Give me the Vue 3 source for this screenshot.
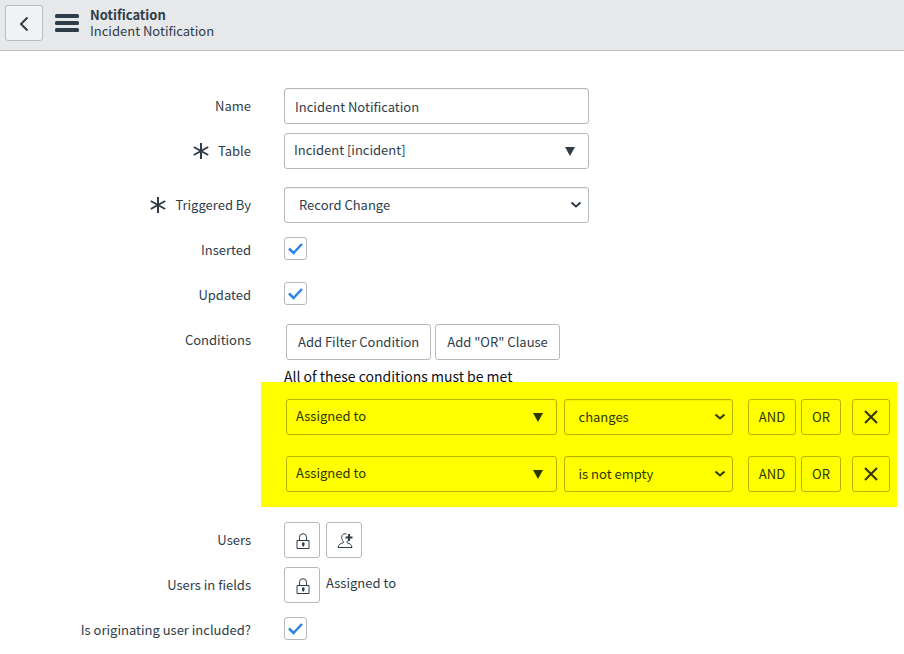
<script setup>
import { reactive } from 'vue'

const form = reactive({
  name: 'Incident Notification',
  table: 'Incident [incident]',
  trigger: 'Record Change',
  inserted: true,
  updated: true,
  originating: true,
})

const conditions = reactive([
  { id: 1, field: 'Assigned to', operator: 'changes' },
  { id: 2, field: 'Assigned to', operator: 'is not empty' },
])
const operators = ['changes', 'is not empty']

function removeCondition(index) {
  conditions.splice(index, 1)
}
</script>

<template>
  <div class="page">
    <header class="bar">
      <button class="back" type="button" aria-label="Back">
        <svg width="12" height="16" viewBox="0 0 12 16"><path d="M9.5 1.5 3 8l6.500 6.500" /></svg>
      </button>
      <button class="menu" type="button" aria-label="Menu">
        <svg width="24" height="18" viewBox="0 0 24 18">
          <rect width="24" height="4" rx="1.500" />
          <rect y="7" width="24" height="4" rx="1.500" />
          <rect y="14" width="24" height="4" rx="1.500" />
        </svg>
      </button>
      <div class="titles">
        <h1>Notification</h1>
        <p>Incident Notification</p>
      </div>
    </header>

    <form class="form" @submit.prevent>
      <div class="row">
        <label class="label" for="name">Name</label>
        <input id="name" v-model="form.name" class="box field text" type="text" />
      </div>

      <div class="row">
        <label class="label" for="table">
          <svg class="star" width="16" height="16" viewBox="0 0 16 16"><path d="M8 0v16M.8 4l14.400 8M15.200 4 .8 12" /></svg>
          Table
        </label>
        <div class="pick field">
          <select id="table" v-model="form.table" class="box reference">
            <option>Incident [incident]</option>
          </select>
          <svg class="triangle" width="10" height="9" viewBox="0 0 10 9"><path d="M0 0h10L5 9z" /></svg>
        </div>
      </div>

      <div class="row spaced">
        <label class="label" for="trigger">
          <svg class="star" width="16" height="16" viewBox="0 0 16 16"><path d="M8 0v16M.8 4l14.400 8M15.200 4 .8 12" /></svg>
          Triggered By
        </label>
        <div class="pick field">
          <select id="trigger" v-model="form.trigger" class="box choice">
            <option>Record Change</option>
          </select>
          <svg class="chevron" width="12" height="8" viewBox="0 0 12 8"><path d="m1.500 1.500 4.500 4 4.500-4" /></svg>
        </div>
      </div>

      <div class="row">
        <label class="label" for="inserted">Inserted</label>
        <span class="check">
          <input id="inserted" v-model="form.inserted" type="checkbox" />
          <svg v-if="form.inserted" width="15" height="12" viewBox="0 0 15 12"><path d="m1 5.500 4.500 4.500L14 1" /></svg>
        </span>
      </div>

      <div class="row">
        <label class="label" for="updated">Updated</label>
        <span class="check">
          <input id="updated" v-model="form.updated" type="checkbox" />
          <svg v-if="form.updated" width="15" height="12" viewBox="0 0 15 12"><path d="m1 5.500 4.500 4.500L14 1" /></svg>
        </span>
      </div>

      <div class="row">
        <span class="label">Conditions</span>
        <div class="conditions">
          <div class="actions">
            <button class="box" type="button">Add Filter Condition</button>
            <button class="box" type="button">Add "OR" Clause</button>
          </div>
          <p class="hint">All of these conditions must be met</p>
          <div class="highlight">
            <div v-for="(c, i) in conditions" :key="c.id" class="condition">
              <div class="pick subject">
                <select v-model="c.field" class="box reference" aria-label="Field">
                  <option>Assigned to</option>
                </select>
                <svg class="triangle" width="10" height="9" viewBox="0 0 10 9"><path d="M0 0h10L5 9z" /></svg>
              </div>
              <div class="pick operator">
                <select v-model="c.operator" class="box choice" aria-label="Operator">
                  <option v-for="o in operators" :key="o">{{ o }}</option>
                </select>
                <svg class="chevron" width="12" height="8" viewBox="0 0 12 8"><path d="m1.500 1.500 4.500 4 4.500-4" /></svg>
              </div>
              <div class="joins">
                <button class="box" type="button">AND</button>
                <button class="box" type="button">OR</button>
              </div>
              <button class="box remove" type="button" aria-label="Remove condition" @click="removeCondition(i)">
                <svg width="14" height="14" viewBox="0 0 14 14"><path d="m1 1 12 12M13 1 1 13" /></svg>
              </button>
            </div>
          </div>
        </div>
      </div>

      <div class="row after">
        <span class="label">Users</span>
        <div class="icons">
          <button class="box icon" type="button" aria-label="Unlock Users">
            <svg width="16" height="16" viewBox="0 0 16 16">
              <path d="M2 7.500h12v8H2zM4.500 7.500V4.200a3.500 3.500 0 0 1 7 0v3.300" />
              <path class="solid" d="M7 9.500h2.500v2L9 13.500H7.500L7 11.500z" />
            </svg>
          </button>
          <button class="box icon" type="button" aria-label="Add me">
            <svg width="16" height="16" viewBox="0 0 16 16">
              <path d="M9.500 1C7 .300 4.700 1.500 4.700 4.200c0 2 .7 3.500 1.600 4.300v1.300c-2.800.7-4.600 1.400-5.300 4.700h14c-.5-3-2-4-4.800-4.700V8.500c.6-.5 1-1.200 1.300-2" />
              <path class="plus" d="M12 1v7M8.500 4.500h7" />
            </svg>
          </button>
        </div>
      </div>

      <div class="row">
        <span class="label">Users in fields</span>
        <div class="icons">
          <button class="box icon" type="button" aria-label="Unlock Users in fields">
            <svg width="16" height="16" viewBox="0 0 16 16">
              <path d="M2 7.500h12v8H2zM4.500 7.500V4.200a3.500 3.500 0 0 1 7 0v3.300" />
              <path class="solid" d="M7 9.500h2.500v2L9 13.500H7.500L7 11.500z" />
            </svg>
          </button>
          <span class="value">Assigned to</span>
        </div>
      </div>

      <div class="row">
        <label class="label" for="originating">Is originating user included?</label>
        <span class="check">
          <input id="originating" v-model="form.originating" type="checkbox" />
          <svg v-if="form.originating" width="15" height="12" viewBox="0 0 15 12"><path d="m1 5.500 4.500 4.500L14 1" /></svg>
        </span>
      </div>
    </form>
  </div>
</template>

<style>
body {
  background: #fff;
}
</style>

<style scoped>
.page {
  --ink: #2e3d49;
  --line: #b5b9bc;
  color: var(--ink);
  font: 13px/20px "Noto Sans CJK JP", "Open Sans", sans-serif;
}
.page * {
  box-sizing: border-box;
}
button,
input,
select {
  font: inherit;
  color: inherit;
  margin: 0;
}
h1,
p {
  margin: 0;
}
svg {
  display: block;
  flex: none;
  fill: none;
  stroke: currentColor;
}
.bar {
  display: flex;
  align-items: flex-start;
  padding: 5px;
  height: 51px;
  background: #e6e8ea;
  border-bottom: 1px solid #babcbe;
}
.back {
  display: grid;
  place-items: center;
  width: 38px;
  height: 36px;
  padding: 2px 0 0;
  background: #f1f2f4;
  border: 1px solid #b9bdc2;
  border-radius: 3px;
}
.back svg {
  stroke-width: 2;
}
.menu {
  margin: 9px 11px 0 12px;
  padding: 0;
  border: 0;
  background: none;
}
.menu svg {
  fill: currentColor;
  stroke: none;
}
.titles {
  padding-top: 2px;
}
.titles > * {
  font-size: 13px;
  line-height: 16px;
}
h1 {
  font-weight: 700;
}
.form {
  display: flex;
  flex-direction: column;
  gap: 9px;
  padding: 37px 7px 5px 0;
}
.row {
  display: grid;
  grid-template-columns: 251px minmax(0, 1fr);
  column-gap: 33px;
  align-items: start;
}
.spaced {
  margin-top: 9px;
}
.after {
  margin-top: 6px;
}
.label {
  display: flex;
  align-items: center;
  justify-content: flex-end;
  gap: 9px;
  min-height: 36px;
  white-space: nowrap;
}
.star {
  stroke-width: 2;
}
.box {
  height: 36px;
  padding: 0 11px;
  background: transparent;
  border: 1px solid var(--line);
  border-radius: 3px;
  white-space: nowrap;
}
.field {
  width: 100%;
  max-width: 305px;
}
.text,
.choice {
  box-shadow: inset 0 1px 1px rgba(0, 0, 0, 0.06);
}
.text {
  padding: 0 10px;
}
.pick {
  position: relative;
}
.pick select {
  width: 100%;
  appearance: none;
}
.reference {
  padding: 0 30px 2px 9px;
}
.choice {
  padding: 0 24px 0 14px;
}
.triangle,
.chevron {
  position: absolute;
  pointer-events: none;
  top: 14px;
}
.triangle {
  right: 14px;
  fill: currentColor;
  stroke: none;
}
.chevron {
  right: 7px;
  stroke-width: 2;
}
.check {
  display: grid;
  place-items: center;
  width: 23px;
  height: 23px;
  margin-top: 5px;
}
.check > * {
  grid-area: 1 / 1;
}
.check input {
  width: 23px;
  height: 23px;
  appearance: none;
  background: #fff;
  border: 1px solid var(--line);
  border-radius: 3px;
}
.check svg {
  z-index: 1;
  pointer-events: none;
  stroke: #2f83e8;
  stroke-width: 2.5;
}
.conditions {
  padding-top: 2px;
}
.actions {
  display: flex;
  gap: 4px;
  padding-left: 2px;
}
.hint {
  margin-top: 4px;
  color: #111;
  font-size: 14px;
  line-height: 24px;
}
.highlight {
  --line: #b5b500;
  display: flex;
  flex-direction: column;
  gap: 21px;
  margin: -6px 0 0 -23px;
  padding: 17px 7px 15px 25px;
  background: #ff0;
  color: #2e3600;
}
.condition {
  display: flex;
}
.subject {
  flex: 270 1 0;
  margin-right: 7px;
}
.operator {
  flex: 169 1 0;
  margin-right: 15px;
}
.joins {
  display: flex;
  gap: 5px;
  margin-right: 11px;
}
.joins .box {
  padding: 0 10px;
}
.condition .remove {
  width: 38px;
}
.remove svg {
  stroke-width: 2;
}
.remove,
.icon {
  display: grid;
  place-items: center;
  padding: 0;
}
.icons {
  display: flex;
  gap: 6px;
}
.icon {
  width: 36px;
  padding: 1px 0 0 1px;
}
.icon .solid {
  fill: currentColor;
  stroke: none;
}
.icon .plus {
  stroke-width: 2;
}
.value {
  line-height: 32px;
}
</style>
